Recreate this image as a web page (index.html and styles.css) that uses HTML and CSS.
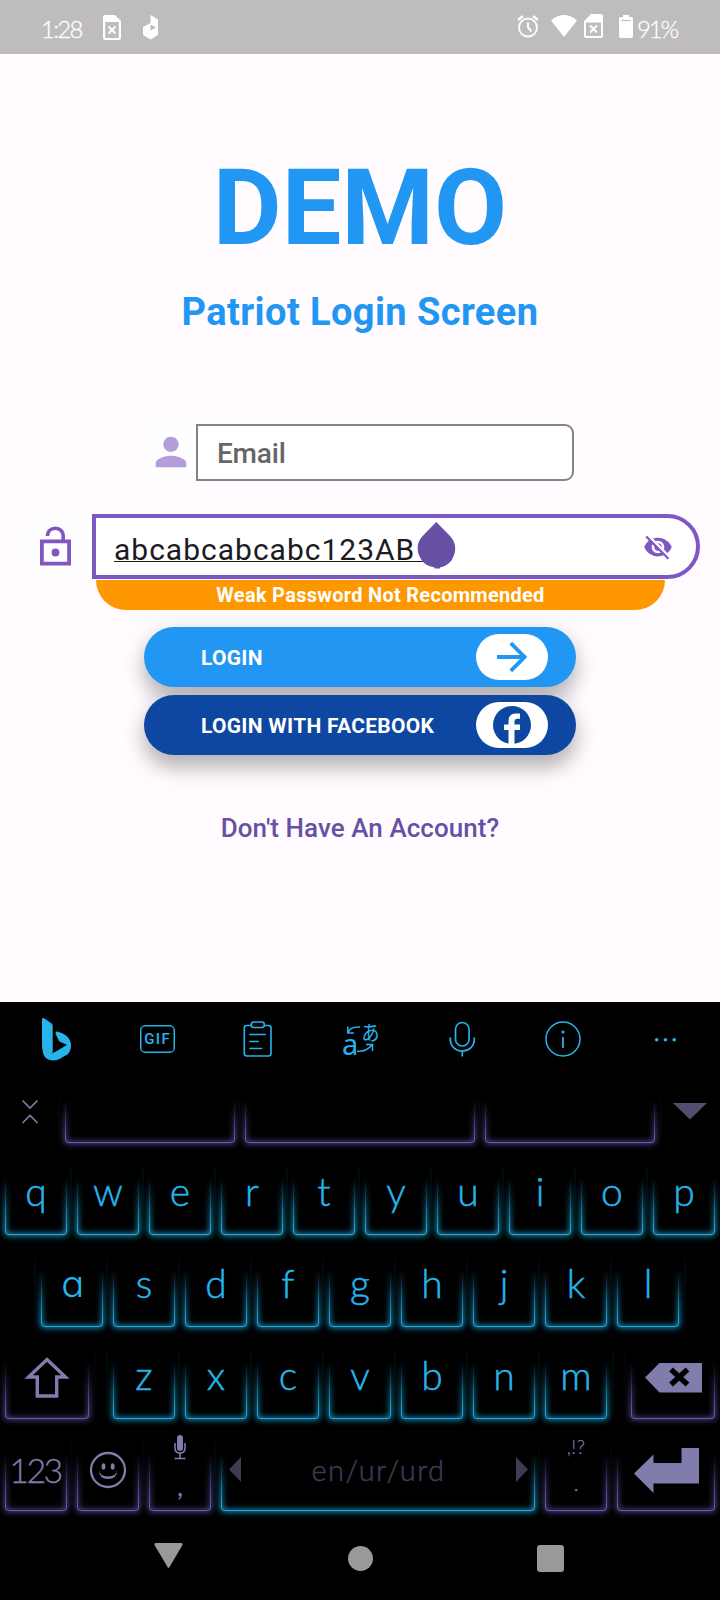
FILE: index.html
```html
<!DOCTYPE html>
<html lang="en">
<head>
<meta charset="utf-8">
<title>Demo Login</title>
<link rel="stylesheet" href="styles.css">
</head>
<body>
<div class="phone">
  <header class="status">
    <span class="clock">1:28</span>
    <svg class="st-sim" width="18" height="25" viewBox="0 0 18 25"><path fill="#fff" fill-rule="evenodd" d="M2 0H12L18 6V23Q18 25 16 25H2Q0 25 0 23V2Q0 0 2 0ZM2.200 7V23H15.800V7Z"/><path stroke="#fff" stroke-width="1.900" d="M5.500 11.500L12.500 18.500M12.500 11.500L5.500 18.500"/></svg>
    <svg class="st-app" width="15" height="25" viewBox="0 0 15 25"><path fill="#fff" d="M7.500 0L15 4.500V20L7.500 24.500L0 20V12L7.500 8Z"/><path fill="#bebcbd" d="M7.500 9.500L13 12.500L7.500 15.500Z"/></svg>
    <span class="spacer"></span>
    <svg class="st-alarm" width="22" height="23" viewBox="0 0 22 23" fill="none" stroke="#fff" stroke-width="1.900"><circle cx="11" cy="12.500" r="9"/><path d="M11 7.500V12.500L14.500 16.500"/><path stroke-width="2.400" d="M1 5L6 1M21 5L16 1"/></svg>
    <svg class="st-wifi" width="26" height="22" viewBox="0 0 26 22"><path fill="#fff" d="M0 5.500Q13 -5.500 26 5.500L13 22Z"/></svg>
    <svg class="st-sim2" width="19" height="24" viewBox="0 0 19 24"><path fill="#fff" fill-rule="evenodd" d="M7 0H17Q19 0 19 2V22Q19 24 17 24H2Q0 24 0 22V7ZM2 8.500V22H17V8.500Z"/><path stroke="#fff" stroke-width="1.900" d="M6 11.500L13 18.500M13 11.500L6 18.500"/></svg>
    <svg class="st-bat" width="14" height="23" viewBox="0 0 14 23"><path fill="#fff" d="M4 0H10V2H12.500Q14 2 14 3.500V21Q14 23 12 23H2Q0 23 0 21V3.500Q0 2 1.500 2H4Z"/><path stroke="#bebcbd" stroke-width="1.200" d="M2.500 5.500H11.500"/></svg>
    <span class="percent">91%</span>
  </header>

  <main class="login">
    <h1 class="title">DEMO</h1>
    <h2 class="subtitle">Patriot Login Screen</h2>

    <div class="email">
      <svg class="person" width="46" height="46" viewBox="0 0 24 24"><path fill="#b39ddb" d="M12 12c2.210 0 4-1.790 4-4s-1.790-4-4-4-4 1.790-4 4 1.790 4 4 4zm0 2c-2.670 0-8 1.340-8 4v2h16v-2c0-2.660-5.330-4-8-4z"/></svg>
      <div class="email-box">Email</div>
    </div>

    <div class="password">
      <svg class="lock" width="31" height="40" viewBox="0 0 31 40"><path fill="none" stroke="#7e57c2" stroke-width="3.800" d="M1.900 15.400H29.100V37.600H1.900Z"/><path fill="none" stroke="#7e57c2" stroke-width="3.600" d="M7.500 10C7.500 5 11 2.200 15.400 2.200S23.200 5.500 23.200 9.800V15"/><circle cx="15.500" cy="26.500" r="3.900" fill="#7e57c2"/></svg>
      <div class="password-box">
        <span class="password-text">abcabcabcabc123AB</span>
        <svg class="handle" width="39" height="47" viewBox="0 0 39 47"><path fill="#6750a4" d="M19.300 0L33 14A19 19 0 0 1 23 45.500V46.500H17.500V45.500A19 19 0 0 1 5.600 14Z"/></svg>
        <svg class="eye" width="30" height="30" viewBox="0 0 24 24"><path fill="#7e57c2" d="M12 7c2.760 0 5 2.240 5 5 0 .65-.13 1.260-.36 1.830l2.920 2.920c1.510-1.260 2.700-2.890 3.430-4.750-1.730-4.390-6-7.500-11-7.500-1.400 0-2.740.25-3.980.7l2.160 2.160C10.740 7.130 11.350 7 12 7zM2 4.270l2.280 2.280.46.46C3.080 8.300 1.780 10.020 1 12c1.730 4.390 6 7.500 11 7.500 1.550 0 3.030-.3 4.380-.84l.42.42L19.730 22 21 20.730 3.270 3 2 4.270zM7.530 9.800l1.550 1.550c-.05.21-.08.43-.08.65 0 1.660 1.340 3 3 3 .22 0 .44-.03.65-.08l1.550 1.550c-.67.33-1.410.53-2.200.53-2.760 0-5-2.240-5-5 0-.79.2-1.530.53-2.200zm4.310-.78l3.150 3.150.02-.16c0-1.660-1.340-3-3-3l-.17.010z"/></svg>
      </div>
    </div>
    <div class="weak">Weak Password Not Recommended</div>

    <div class="btn btn-login"><span class="btn-label">LOGIN</span>
      <span class="pill"><svg width="32" height="32" viewBox="0 0 32 32"><path fill="none" stroke="#2196f3" stroke-width="3.800" d="M1 16H28M14.800 2.200L28.600 16L14.800 29.800"/></svg></span>
    </div>
    <div class="btn btn-fb"><span class="btn-label">LOGIN WITH FACEBOOK</span>
      <span class="pill"><svg width="38" height="38" viewBox="0 0 38 38"><circle cx="19" cy="19" r="19" fill="#0d47a1"/><path fill="#fff" d="M15.500 38V24H11V18.500H15.500V15Q15.500 7.500 22.500 7.500H27V12.800H24.500Q21.500 12.800 21.500 15.800V18.500H27V24H21.500V38Z"/></svg></span>
    </div>
    <div class="signup">Don't Have An Account?</div>
  </main>

  <section class="keyboard">
    <div class="tools">
      <svg width="102" height="74" viewBox="0 0 102 74"><path fill="#26b4ea" d="M42 17Q42.500 15.500 44 16.300L51 21Q52.700 22 52.700 24V50.500L46 55Q42 51 42 44Z"/><path fill="#26b4ea" d="M55.500 31.500Q55.500 28.800 58 29.700Q71 33.500 71 44Q71 49 67 53L53 54.500L68.500 43.500L60.500 40Q59 39.500 58.500 38Z"/><path fill="#26b4ea" d="M43 49Q48 54 55 50L68.500 42Q72.500 47.500 67 52.500L60 56.700Q52 60.500 46.500 56.500Q43 53.500 43 49Z"/></svg>
      <div class="gif"><span>GIF</span></div>
      <svg width="100" height="74" viewBox="-.3 0 100 74" fill="none" stroke="#26b4ea" stroke-width="1.600"><path d="M43 23.500H38.500Q36 23.500 36 26V51.500Q36 54 38.500 54H60Q62.700 54 62.700 51.500V26Q62.700 23.500 60 23.500H56"/><rect x="43" y="20" width="13" height="5.500" rx="2.500"/><path d="M41 32.500H57.500M41 39.500H50.500M41 46.500H54"/></svg>
      <div class="translate"><span class="tr-a">a</span><span class="tr-j">あ</span>
        <svg width="36" height="32" viewBox="0 0 36 32" fill="none" stroke="#26b4ea" stroke-width="1.500"><path d="M6 11.500Q8 5.500 18 6M5.800 5.500V12H12M15 30.500Q25 30.500 30 24M24 23.500H30.500V30"/></svg></div>
      <svg width="102" height="74" viewBox="-1.300 0 102 74" fill="none" stroke="#26b4ea" stroke-width="1.700"><rect x="44.200" y="20.500" width="13.600" height="23.500" rx="6.800"/><path d="M39 35.500V37C39 44.500 44.500 49 51 49S63 44.500 63 37V35.500M51 49V54.500"/></svg>
      <svg width="100" height="74" viewBox="0 0 100 74" fill="none" stroke="#26b4ea" stroke-width="1.500"><circle cx="51" cy="37" r="17"/><path d="M51 35V46" stroke-width="1.800"/><circle cx="51" cy="30" r=".8"/></svg>
      <svg width="104" height="74" viewBox="0 0 104 74" fill="#26b4ea"><circle cx="44.700" cy="37.700" r="1.800"/><circle cx="53.400" cy="37.700" r="1.800"/><circle cx="62.200" cy="37.700" r="1.800"/></svg>
    </div>

    <div class="suggest">
      <svg class="collapse" width="18" height="26" viewBox="0 0 18 26" fill="none" stroke="#807cab" stroke-width="1.600"><path d="M1.500 1.500L9 9L16.500 1.500M1.500 24L9 16.500L16.500 24"/></svg>
      <div class="key violet s1"></div><div class="key violet s2"></div><div class="key violet s1"></div>
      <svg class="more" width="34" height="17" viewBox="0 0 34 17"><path fill="#524e6d" d="M0 0H34L17 16.500Z"/></svg>
    </div>

    <div class="row">
      <div class="key"><b>q</b></div><div class="key"><b>w</b></div><div class="key"><b>e</b></div><div class="key"><b>r</b></div><div class="key"><b>t</b></div><div class="key"><b>y</b></div><div class="key"><b>u</b></div><div class="key"><b>i</b></div><div class="key"><b>o</b></div><div class="key"><b>p</b></div>
    </div>
    <div class="row row-mid">
      <div class="key"><b class="round-a">a</b></div><div class="key"><b>s</b></div><div class="key"><b>d</b></div><div class="key"><b>f</b></div><div class="key"><b>g</b></div><div class="key"><b>h</b></div><div class="key"><b>j</b></div><div class="key"><b>k</b></div><div class="key"><b>l</b></div>
    </div>
    <div class="row row-low">
      <div class="key violet wide"><svg class="ic-shift" width="46" height="42" viewBox="0 0 46 42"><path fill="none" stroke="#807cab" stroke-width="3.400" d="M23 2.500L41.500 20H32.700V39H13.300V20H4.500Z"/></svg></div>
      <div class="letters"><div class="key"><b>z</b></div><div class="key"><b>x</b></div><div class="key"><b>c</b></div><div class="key"><b>v</b></div><div class="key"><b>b</b></div><div class="key"><b>n</b></div><div class="key"><b>m</b></div></div>
      <div class="key violet wide"><svg class="ic-del" width="57" height="30" viewBox="0 0 57 30"><path fill="#807cab" d="M0 14.500L14.500 0H57V29.500H14.500Z"/><path stroke="#000" stroke-width="5.400" d="M26 6.500L42.500 21.500M42.500 6.500L26 21.500"/></svg></div>
    </div>
    <div class="row">
      <div class="key violet"><b class="num">123</b></div>
      <div class="key violet"><svg class="ic-smile" width="38" height="38" viewBox="0 0 38 38"><circle cx="19" cy="19" r="17" fill="none" stroke="#807cab" stroke-width="2.300"/><ellipse cx="14.500" cy="15.500" rx="1.900" ry="3.200" fill="#807cab"/><ellipse cx="23.700" cy="15.500" rx="1.900" ry="3.200" fill="#807cab"/><path fill="#807cab" d="M10 19Q11 25.500 19 25.500T28.200 19Q28 28 19 28T10 19Z"/></svg></div>
      <div class="key violet"><svg class="ic-mic" width="14" height="25" viewBox="0 0 14 25"><rect x="4" y="0" width="6" height="16" rx="3" fill="#807cab"/><path fill="none" stroke="#807cab" stroke-width="1.600" d="M2 8V13Q2 18 7 18T12 13V8M7 18V23.500M1.500 23.500H12.500"/></svg><b class="comma">,</b></div>
      <div class="key space"><svg class="ic-left" width="12" height="25" viewBox="0 0 12 25"><path fill="#3e3b53" d="M12 0V25L0 12.500Z"/></svg><b class="lang">en/ur/urd</b><svg class="ic-left" width="12" height="25" viewBox="0 0 12 25"><path fill="#3e3b53" d="M0 0V25L12 12.500Z"/></svg></div>
      <div class="key violet"><b class="punct">,!?</b><b class="dot">.</b></div>
      <div class="key violet enter"><svg class="ic-enter" width="65" height="45" viewBox="0 0 65 45"><path fill="#807cab" d="M0 25.500L19.500 6.500V15H47.500V0H65V35.500H19.500V45Z"/></svg></div>
    </div>

    <nav class="nav">
      <svg width="29" height="26" viewBox="0 0 29 26"><path fill="#999" d="M1.500 0H27.500Q29 .5 28.500 2L15.500 24Q14.500 26 13.500 24L.5 2Q0 .5 1.500 0Z"/></svg>
      <i class="home"></i>
      <i class="recent"></i>
    </nav>
  </section>
</div>
</body>
</html>
```
FILE: styles.css
```css
* { box-sizing: border-box; }
body { margin: 0; background: #fffbff; }
svg { display: block; flex: none; }
.phone { width: 720px; height: 1600px; overflow: hidden; font-family: Roboto, "Liberation Sans", sans-serif; display: flex; flex-direction: column; }

.status { height: 54px; flex: none; background: #bebcbd; color: #fff; display: flex; align-items: flex-start; padding: 0 41px; font: 300 24px/28px Lato, Roboto, sans-serif; -webkit-text-stroke: .3px #fff; }
.clock { width: 61px; padding-top: 15px; letter-spacing: -1.700px; }
.st-sim { margin: 15px 0 0 1px; }
.st-app { margin: 15px 0 0 22px; }
.spacer { flex: 1; }
.st-alarm { margin: 15px 12px 0 0; }
.st-wifi { margin: 15px 7px 0 0; }
.st-sim2 { margin: 14px 16px 0 0; }
.st-bat { margin: 15px 0 0; }
.percent { width: 42px; margin-left: 4px; padding-top: 15px; white-space: nowrap; letter-spacing: -2.200px; }

.login { height: 948px; flex: none; display: flex; flex-direction: column; }
.title { margin: 92px 0 0; font-size: 106px; line-height: 124px; font-weight: 700; color: #2196f3; text-align: center; }
.subtitle { margin: 18px 0 0; font-size: 38px; line-height: 48px; letter-spacing: .4px; font-weight: 700; color: #2196f3; text-align: center; }

.email { margin: 86px 146px 0 144px; height: 60px; display: flex; align-items: center; background: #fffeff; border-radius: 10px; }
.person { margin: 0 2px 0 4px; }
.email-box { flex: 1; height: 57px; margin: 1px 0 0; border: 2px solid #86818b; border-radius: 0 9px 9px 0; background: #fff; padding-left: 19px; font-size: 28px; line-height: 55px; letter-spacing: -.2px; font-weight: 500; color: #666; }

.password { margin: 31px 20px 0 18px; height: 67px; display: flex; align-items: center; background: #fffeff; border-radius: 34px; }
.lock { margin: -2px 21px 0 22px; }
.password-box { flex: 1; height: 65px; margin-top: 0; position: relative; display: flex; align-items: center; border: 4px solid #7e57c2; border-radius: 0 33px 33px 0; background: #fff; padding: 0 23px 0 18px; }
.password-text { font-size: 30px; line-height: 36px; letter-spacing: 1px; color: #1c1b1f; width: 310px; height: 30px; margin-top: 1px; border-bottom: 1px solid #1c1b1f; }
.handle { position: absolute; left: 321px; top: 4px; }
.eye { margin-left: auto; }
.weak { margin: 0 55px 0 96px; height: 30px; background: #ff9800; border-radius: 0 0 30px 30px; color: #fff; font-size: 20px; line-height: 30px; letter-spacing: .28px; font-weight: 700; text-align: center; }

.btn { margin: 0 144px; height: 60px; border-radius: 30px; display: flex; align-items: center; justify-content: space-between; padding: 0 28px 0 57px; color: #fff; box-shadow: 0 14px 20px rgba(0,0,0,.22), 0 4px 24px rgba(0,0,0,.12); }
.btn-login { margin-top: 17px; background: #2196f3; }
.btn-fb { margin-top: 8px; background: #0d47a1; position: relative; }
.btn-label { font-size: 21px; letter-spacing: .28px; padding-top: 1px; font-weight: 700; white-space: nowrap; }
.pill { width: 72px; height: 46px; border-radius: 23px; background: #fff; display: flex; align-items: center; justify-content: center; }
.signup { margin-top: 57px; font-size: 26px; line-height: 32px; letter-spacing: .06px; font-weight: 500; color: #6750a4; text-align: center; }

.keyboard { height: 598px; flex: none; background: #000; color: #26b4ea; }
.tools { height: 74px; display: flex; align-items: center; }
.gif { width: 106px; height: 74px; display: flex; align-items: center; justify-content: center; padding-left: 4px; }
.gif span { width: 35px; height: 28px; border: 1.500px solid #26b4ea; border-radius: 5px; font: 500 15px/26px Roboto, sans-serif; letter-spacing: 1.500px; padding-left: 1.500px; text-align: center; box-shadow: inset 0 0 0 .5px #26b4ea; }
.translate { width: 102px; height: 74px; position: relative; }
.translate svg { position: absolute; left: 34px; top: 19px; }
.tr-a { position: absolute; left: 34px; top: 24px; font: 400 29px/36px "Noto Sans", sans-serif; }
.tr-j { position: absolute; left: 53px; top: 17px; font: 400 19px/24px "Noto Sans CJK JP", sans-serif; transform: scale(.95, 1.100); }

.suggest { height: 67px; display: flex; align-items: flex-end; padding: 0 13px 0 21px; }
.collapse { margin: 0 26px 18px 0; }
.suggest .key { margin-right: 10px; }
.s1.key { width: 170px; }
.s2.key { width: 230px; }
.more { margin: 0 0 23px 8px; }

.row { height: 92px; display: flex; gap: 10px; padding-left: 5px; }
.row-mid { padding-left: 41px; }
.row-low { padding-right: 5px; justify-content: space-between; }
.letters { display: flex; gap: 10px; }
.key { --c: #28a8d8; --g: #178fbd; width: 62px; height: 92px; flex: none; position: relative; display: flex; flex-direction: column; align-items: center; }
.violet { --c: #625cab; --g: #4a4388; color: #807cab; }
.key::before { content: ""; position: absolute; left: 0; right: 0; bottom: 0; height: 66px; border: 1.500px solid var(--c); border-top: 0; border-radius: 0 0 4px 4px; box-shadow: 0 0 6px .5px var(--g), inset 0 0 6px .5px var(--g); }
.key::after { content: ""; position: absolute; left: -5px; right: -5px; bottom: 3px; height: 76px; background: linear-gradient(#000 28%, rgba(0,0,0,.7) 48%, rgba(0,0,0,.3) 72%, transparent); }
.suggest .key { height: 67px; }
.suggest .key::before { height: 44px; }
.suggest .key::after { height: 56px; }
.key b, .key svg { position: relative; z-index: 1; }
.key b { font: 300 39px/46px Lato, "Noto Sans", sans-serif; margin-top: 25px; -webkit-text-stroke: .5px currentColor; }
.key .round-a { font-family: Inter, Lato, sans-serif; font-size: 36px; font-feature-settings: "cv11"; margin-top: 26px; -webkit-text-stroke: 0; transform: translateX(1px) scaleX(1.060); }
.wide { width: 84px; }
.ic-shift { margin-top: 30px; }
.ic-del { margin: 36px 0 0 0; }
.key .num { font-size: 34px; line-height: 40px; margin: 31px 2px 0 0; letter-spacing: -2.500px; -webkit-text-stroke-width: .3px; }
.ic-smile { margin-top: 32px; }
.ic-mic { margin-top: 16px; }
.key .comma { font-size: 25px; line-height: 30px; margin-top: 11px; font-weight: 400; -webkit-text-stroke-width: .3px; }
.space { width: 314px; flex-direction: row; justify-content: space-between; align-items: flex-start; padding: 0 7px 0 8px; }
.ic-left { margin-top: 38px; }
.key .lang { font-size: 29px; line-height: 34px; margin-top: 34px; color: #3e3b53; letter-spacing: 1.400px; }
.key .punct { font-size: 19px; line-height: 24px; margin-top: 16px; letter-spacing: .5px; -webkit-text-stroke-width: .2px; }
.key .dot { font-size: 20px; line-height: 24px; margin-top: 12px; }
.enter { width: 98px; }
.ic-enter { margin-top: 29px; }

.nav { height: 89px; display: flex; align-items: flex-start; padding: 32px 0 0 154px; }
.home { width: 25px; height: 25px; border-radius: 50%; background: #999; margin: 3px 0 0 165px; }
.recent { width: 27px; height: 27px; border-radius: 3px; background: #999; margin: 2px 0 0 164px; }
```
